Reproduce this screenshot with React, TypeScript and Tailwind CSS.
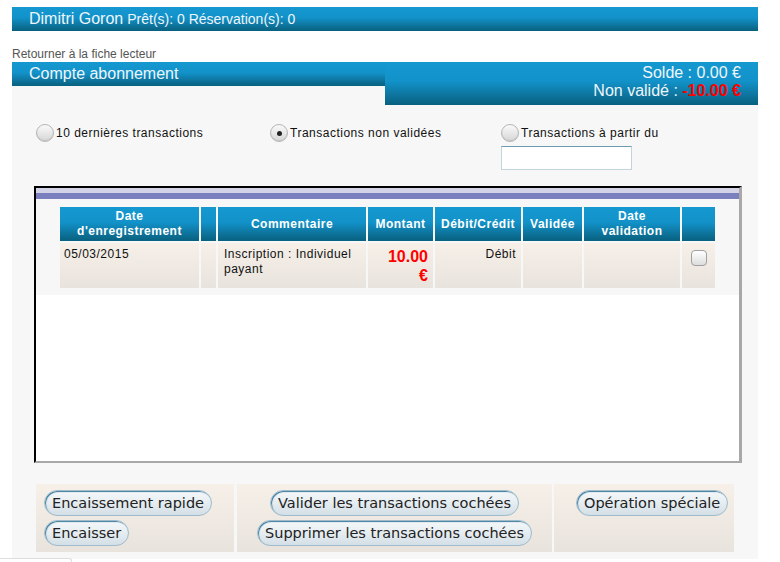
import React from "react";

const bar =
  "bg-[linear-gradient(to_bottom,#1598d0_0%,#1292c9_45%,#0c6d92_85%,#08617f_100%)]";
const rowBg = "bg-[linear-gradient(to_bottom,#f6f0e9_0%,#e9e3dd_100%)]";
const cellFont = "font-['Liberation_Sans',Arial,sans-serif] text-[12px] tracking-[0.5px]";

function Radio({ checked, label }: { checked?: boolean; label: string }) {
  return (
    <div className="flex items-center">
      <div className="w-[18px] h-[18px] rounded-full border border-[#b5b5b5] bg-[linear-gradient(to_bottom,#fafafa,#d6d6d6)] shadow-[inset_0_-1px_1px_rgba(0,0,0,0.08)] flex items-center justify-center">
        {checked && <div className="w-[5px] h-[5px] rounded-full bg-[#222]" />}
      </div>
      <span className={`ml-[2px] text-[#111] ${cellFont}`}>{label}</span>
    </div>
  );
}

function Btn({ children }: { children: React.ReactNode }) {
  return (
    <button className="h-[26px] px-[7px] rounded-full border border-[#9fbccc] bg-[linear-gradient(to_bottom,#f5f8fa_0%,#e6edf1_50%,#d3dfe6_100%)] shadow-[inset_1px_1px_1px_#3f7b9c] font-['DejaVu_Sans',sans-serif] text-[14.5px] text-[#222] leading-[24px] whitespace-nowrap">
      {children}
    </button>
  );
}

export default function App() {
  const headers = [
    "Date d'enregistrement",
    "",
    "Commentaire",
    "Montant",
    "Débit/Crédit",
    "Validée",
    "Date validation",
    "",
  ];
  return (
    <div className="w-[780px] h-[562px] bg-white relative overflow-hidden font-['Liberation_Sans',Arial,sans-serif]">
      <div className="pt-[7px] pl-[12px]">
        <div className={`w-[746px] h-[24px] ${bar} flex items-baseline pl-[17px] text-[#eef6fb] leading-[24px]`}>
          <span className="text-[16px]">Dimitri Goron</span>
          <span className="text-[14px] ml-[4px]">Prêt(s): 0 Réservation(s): 0</span>
        </div>
        <div className="mt-[16px] h-[15px] text-[12px] leading-[15px] text-[#555]">
          Retourner à la fiche lecteur
        </div>
        <div className="w-[746px] h-[497px] bg-[#f7f7f7] flex flex-col">
          <div className="flex items-start">
            <div className={`w-[373px] h-[24px] ${bar} pl-[17px] text-[16px] leading-[24px] text-[#eef6fb]`}>
              Compte abonnement
            </div>
            <div className={`w-[373px] h-[43px] ${bar} pr-[17px] pt-[2px] text-right text-[16px] leading-[18px] text-[#eef6fb]`}>
              <div>Solde : 0.00 €</div>
              <div>
                Non validé : <span className="font-bold text-[#ff0000]">-10.00 €</span>
              </div>
            </div>
          </div>

          <div className="flex pl-[24px] mt-[19px]">
            <div className="w-[234px]">
              <Radio label="10 dernières transactions" />
            </div>
            <div className="w-[231px]">
              <Radio checked label="Transactions non validées" />
            </div>
            <div className="flex flex-col">
              <Radio label="Transactions à partir du" />
              <div className="mt-[4px] w-[131px] h-[24px] bg-white border border-[#c2d4de] border-t-[#6e9bb4]" />
            </div>
          </div>

          <div className="ml-[22px] mt-[16px] w-[708px] h-[277px] border-2 border-r-[3px] border-solid border-[#a8a8a8] border-t-[#000000] border-l-[#000000] bg-white flex flex-col">
            <div className="h-[5px] bg-[#d2d3e7]" />
            <div className="h-[6px] bg-[#7a80bd]" />
            <div className="bg-[#f7f7f7] pt-[8px] pb-[7px] pl-[24px]">
              <div className="grid grid-cols-[139px_15px_148px_65px_86px_59px_96px_33px] gap-[2px]">
                {headers.map((h, i) => (
                  <div
                    key={i}
                    className={`h-[34px] ${bar} flex items-center justify-center text-center font-bold text-white leading-[15px] px-[2px] ${cellFont}`}
                  >
                    {h === "Date d'enregistrement" ? (
                      <span>
                        Date
                        <br />
                        d'enregistrement
                      </span>
                    ) : h === "Date validation" ? (
                      <span>
                        Date
                        <br />
                        validation
                      </span>
                    ) : (
                      h
                    )}
                  </div>
                ))}
                <div className={`h-[45px] ${rowBg} pl-[4px] pt-[4px] leading-[15px] text-[#111] ${cellFont}`}>
                  05/03/2015
                </div>
                <div className={`h-[45px] ${rowBg}`} />
                <div className={`h-[45px] ${rowBg} pl-[6px] pr-[4px] pt-[4px] leading-[15px] text-[#111] ${cellFont}`}>
                  Inscription : Individuel payant
                </div>
                <div className={`h-[45px] ${rowBg} pr-[5px] pt-[4px] text-right font-bold text-[16px] leading-[19px] text-[#ff0000]`}>
                  10.00
                  <br />€
                </div>
                <div className={`h-[45px] ${rowBg} pr-[5px] pt-[4px] text-right leading-[15px] text-[#111] ${cellFont}`}>
                  Débit
                </div>
                <div className={`h-[45px] ${rowBg}`} />
                <div className={`h-[45px] ${rowBg}`} />
                <div className={`h-[45px] ${rowBg} flex justify-center pt-[7px]`}>
                  <div className="w-[16px] h-[16px] rounded-[4px] border border-[#a0a0a0] bg-[linear-gradient(to_bottom,#ffffff,#dcdcdc)]" />
                </div>
              </div>
            </div>
          </div>

          <div className="ml-[24px] mt-[21px] flex h-[68px]">
            <div className={`w-[198px] ${rowBg} pl-[8px] pt-[6px] flex flex-col items-start gap-[4px]`}>
              <Btn>Encaissement rapide</Btn>
              <Btn>Encaisser</Btn>
            </div>
            <div className={`ml-[3px] w-[315px] ${rowBg} pt-[6px] flex flex-col items-center gap-[4px]`}>
              <Btn>Valider les transactions cochées</Btn>
              <Btn>Supprimer les transactions cochées</Btn>
            </div>
            <div className={`ml-[2px] w-[180px] ${rowBg} pt-[6px] pl-[22px] flex flex-col items-start`}>
              <Btn>Opération spéciale</Btn>
            </div>
          </div>
        </div>
      </div>
      <div className="absolute left-0 bottom-0 w-[72px] h-[4px] bg-white border-t border-r border-[#dddddd] rounded-tr-[3px]" />
    </div>
  );
}
